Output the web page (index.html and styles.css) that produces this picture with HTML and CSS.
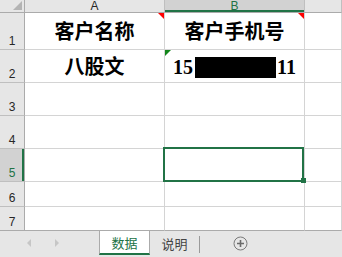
FILE: index.html
```html
<!DOCTYPE html>
<html>
<head>
    <title>数据</title>
    <link rel="stylesheet" href="styles.css">
</head>
<body>
    <div class="sheet">
        <div class="corner"><span class="corner-mark"></span></div>
        <div class="col-head">A</div>
        <div class="col-head selected">B</div>
        <div class="col-head"></div>

        <div class="row-head">1</div>
        <div class="cell title">客户名称<span class="note"></span></div>
        <div class="cell title">客户手机号<span class="note"></span></div>
        <div class="cell"></div>

        <div class="row-head">2</div>
        <div class="cell value">八股文</div>
        <div class="cell value"><span class="flag"></span>15<span class="redact"></span>11</div>
        <div class="cell"></div>

        <div class="row-head">3</div>
        <div class="cell"></div>
        <div class="cell"></div>
        <div class="cell"></div>

        <div class="row-head">4</div>
        <div class="cell"></div>
        <div class="cell"></div>
        <div class="cell"></div>

        <div class="row-head selected">5</div>
        <div class="cell"></div>
        <div class="cell active"><span class="handle"></span></div>
        <div class="cell"></div>

        <div class="row-head">6</div>
        <div class="cell"></div>
        <div class="cell"></div>
        <div class="cell"></div>

        <div class="row-head last">7</div>
        <div class="cell last"></div>
        <div class="cell last"></div>
        <div class="cell last"></div>
    </div>

    <div class="tabbar">
        <div class="nav">
            <span class="arrow arrow-left"></span>
            <span class="arrow arrow-right"></span>
        </div>
        <div class="tab active">数据</div>
        <div class="tab">说明</div>
        <span class="tab-sep"></span>
        <div class="add-sheet">
            <svg width="15" height="15" viewBox="0 0 15 15">
                <circle cx="7.5" cy="7.5" r="6.5" fill="none" stroke="#7a7a7a" stroke-width="1"/>
                <path d="M7.5 4v7M4 7.5h7" stroke="#6a6a6a" stroke-width="1.6"/>
            </svg>
        </div>
    </div>
</body>
</html>
```

FILE: styles.css
```css
* {
    margin: 0;
    padding: 0;
    box-sizing: border-box;
}

body {
    width: 342px;
    height: 257px;
    overflow: hidden;
    background-color: #ffffff;
    font-family: "Liberation Sans", Arial, sans-serif;
}

.sheet {
    display: grid;
    grid-template-columns: 25px 140px 140px 37px;
    grid-template-rows: 13px 37px 33px 33px 33px 33px 25px 24px;
}

.corner {
    position: relative;
    background-color: #e6e6e6;
    border-right: 1px solid #ababab;
    border-bottom: 1px solid #ababab;
}

.corner-mark {
    position: absolute;
    right: 2px;
    bottom: 2px;
    border-bottom: 9px solid #b4b4b4;
    border-left: 9px solid transparent;
}

.col-head {
    background-color: #e6e6e6;
    border-right: 1px solid #bfbfbf;
    border-bottom: 1px solid #ababab;
    color: #262626;
    font-size: 12px;
    line-height: 12px;
    text-align: center;
}

.col-head.selected {
    background-color: #d2d2d2;
    color: #217346;
    box-shadow: inset 0 -2px 0 #217346;
}

.row-head {
    display: flex;
    align-items: flex-end;
    justify-content: center;
    padding-bottom: 2px;
    background-color: #e6e6e6;
    border-right: 1px solid #ababab;
    border-bottom: 1px solid #bfbfbf;
    color: #262626;
    font-size: 12px;
    line-height: 12px;
}

.row-head.selected {
    background-color: #d2d2d2;
    color: #217346;
    box-shadow: inset -2px 0 0 #217346;
}

.cell {
    position: relative;
    display: flex;
    align-items: flex-end;
    justify-content: center;
    border-right: 1px solid #d4d4d4;
    border-bottom: 1px solid #d4d4d4;
}

.row-head.last,
.cell.last {
    border-bottom: 1px solid #ababab;
}

.title,
.value {
    font-family: "Liberation Serif", "Noto Sans CJK SC", serif;
    font-weight: bold;
    font-size: 20px;
    line-height: 20px;
    color: #000000;
}

.title {
    padding-bottom: 7px;
}

.value {
    padding-bottom: 5px;
}

.redact {
    display: inline-block;
    width: 81px;
    height: 21px;
    margin: 0 1px -1px 2px;
    background-color: #000000;
}

.note {
    position: absolute;
    top: 0;
    right: 0;
    border-top: 6px solid #ff0000;
    border-left: 6px solid transparent;
}

.flag {
    position: absolute;
    top: 0;
    left: 0;
    border-top: 6px solid #12861a;
    border-right: 6px solid transparent;
}

.cell.active::after {
    content: "";
    position: absolute;
    left: -2px;
    top: -2px;
    right: 0;
    bottom: -1px;
    border: 2px solid #217346;
}

.handle {
    position: absolute;
    right: -2px;
    bottom: -2px;
    width: 5px;
    height: 5px;
    background-color: #217346;
    z-index: 2;
}

.tabbar {
    display: flex;
    align-items: flex-start;
    height: 26px;
    background-color: #e6e6e6;
}

.nav {
    display: flex;
    align-items: center;
    gap: 24px;
    width: 99px;
    height: 24px;
    padding-left: 27px;
}

.arrow {
    width: 0;
    height: 0;
    border-top: 4px solid transparent;
    border-bottom: 4px solid transparent;
}

.arrow-left {
    border-right: 4px solid #c6c6c6;
}

.arrow-right {
    border-left: 4px solid #c6c6c6;
}

.tab {
    display: flex;
    align-items: center;
    justify-content: center;
    width: 49px;
    height: 24px;
    font-family: "Noto Sans CJK SC", sans-serif;
    font-size: 13px;
    color: #444444;
}

.tab.active {
    width: 51px;
    background-color: #ffffff;
    color: #217346;
    border-left: 1px solid #ababab;
    border-right: 1px solid #ababab;
    border-bottom: 2px solid #217346;
}

.tab-sep {
    width: 1px;
    height: 17px;
    margin-top: 5px;
    background-color: #9a9a9a;
}

.add-sheet {
    display: flex;
    align-items: center;
    height: 24px;
    padding-left: 33px;
}
```
